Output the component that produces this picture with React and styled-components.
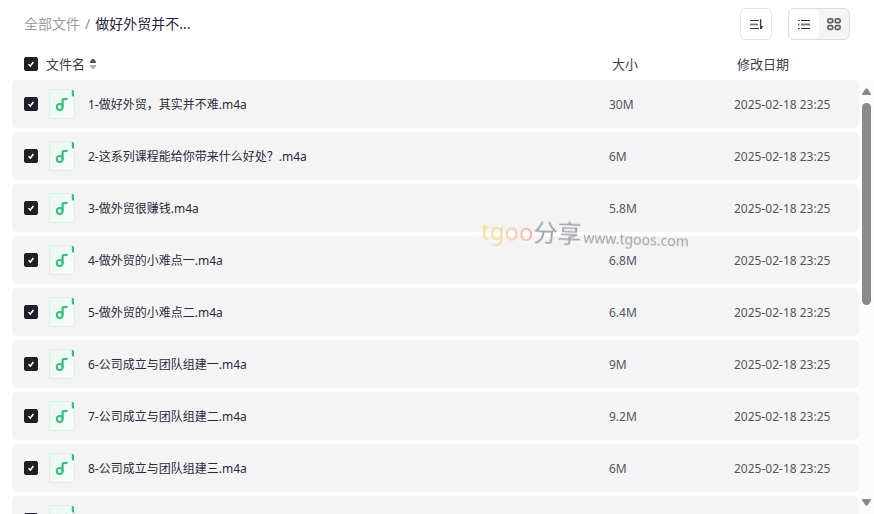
import React, { useState } from "react";
import styled, { createGlobalStyle } from "styled-components";

const initialFiles = [
  { id: 1, name: "1-做好外贸，其实并不难.m4a", size: "30M" },
  { id: 2, name: "2-这系列课程能给你带来什么好处？.m4a", size: "6M" },
  { id: 3, name: "3-做外贸很赚钱.m4a", size: "5.8M" },
  { id: 4, name: "4-做外贸的小难点一.m4a", size: "6.8M" },
  { id: 5, name: "5-做外贸的小难点二.m4a", size: "6.4M" },
  { id: 6, name: "6-公司成立与团队组建一.m4a", size: "9M" },
  { id: 7, name: "7-公司成立与团队组建二.m4a", size: "9.2M" },
  { id: 8, name: "8-公司成立与团队组建三.m4a", size: "6M" },
  { id: 9, name: "", size: "" }, // still loading
];

const modified = "2025-02-18 23:25";

const SortIcon = () => (
  <svg width="16" height="16" viewBox="0 0 16 16" fill="none">
    <path d="M2 4.5h9M2 12.5h9" stroke="#3c3c42" strokeWidth="1.2" />
    <path d="M2 8.5h8" stroke="#77777c" strokeWidth="1.8" />
    <path d="M12.6 3.2v9" stroke="#3c3c42" strokeWidth="1.4" />
    <path d="M12 10h3l-1.2 3H12z" fill="#3c3c42" />
  </svg>
);

const ListIcon = () => (
  <svg width="14" height="14" viewBox="0 0 14 14" fill="none">
    <path d="M1 3.5h1.5M4 3.5h9M1 11.5h1.5M4 11.5h9" stroke="#2b2b31" strokeWidth="1.2" />
    <path d="M1 7.5h1.5M4 7.5h9" stroke="#77777c" strokeWidth="1.8" />
  </svg>
);

const GridIcon = () => (
  <svg width="16" height="14" viewBox="0 0 16 14" fill="none" stroke="#5f5f65" strokeWidth="1.7">
    <rect x="1.9" y="1.9" width="4.8" height="3.8" rx="1.3" />
    <rect x="9.3" y="1.9" width="4.8" height="3.8" rx="1.3" />
    <rect x="1.9" y="8.6" width="4.8" height="3.8" rx="1.3" />
    <rect x="9.3" y="8.6" width="4.8" height="3.8" rx="1.3" />
  </svg>
);

const AudioFileIcon = () => (
  <svg width="26" height="30" viewBox="0 0 26 30" fill="none">
    <defs>
      <linearGradient id="paper" x1="0" y1="0" x2="1" y2="1">
        <stop offset="0" stopColor="#e9f6f0" />
        <stop offset="1" stopColor="#f9fdfb" />
      </linearGradient>
    </defs>
    <path d="M1 .5h22l2.5 7V29a.5.5 0 0 1-.5.5H1a.5.5 0 0 1-.5-.5V1A.5.5 0 0 1 1 .5z" fill="url(#paper)" stroke="#d9f0e5" />
    <path d="M22.8 1h.8c.9.3 1.4 1 1.4 2v4.6h-.7c-.9 0-1.5-.5-1.5-1.4z" fill="#35bd7c" />
    <circle cx="10.7" cy="18" r="2.9" stroke="#35c27f" strokeWidth="2" />
    <path d="M13.6 18v-7.2c0-.4.2-.6.6-.6l3.6-.3" stroke="#35c27f" strokeWidth="2.2" strokeLinejoin="round" strokeLinecap="round" />
  </svg>
);

const SortArrows = () => (
  <svg width="6" height="10" viewBox="0 0 6 10">
    <path d="M2.2 0h1.6L6 2.6V4H0V2.6z" fill="#55555b" />
    <path d="M0 6h6v1.4L3.8 10H2.2L0 7.4z" fill="#b4b4b8" />
  </svg>
);

const ScrollArrow = ({ down }) => (
  <svg width="9" height="7" viewBox="0 0 9 7">
    <path d={down ? "M0 0h9v1L5.5 6.5h-2L0 1z" : "M0 7h9V6L5.5.5h-2L0 6z"} fill="#8a8a8a" />
  </svg>
);

export default function App() {
  const [selected, setSelected] = useState(initialFiles.map((file) => file.id));
  const [view, setView] = useState("list");

  const allSelected = selected.length === initialFiles.length;

  const toggleAll = () => {
    setSelected(allSelected ? [] : initialFiles.map((file) => file.id));
  };

  const toggleFile = (id) => {
    setSelected(
      selected.includes(id) ? selected.filter((item) => item !== id) : [...selected, id]
    );
  };

  return (
    <Page>
      <GlobalStyle />
      <TopBar>
        <Breadcrumb>
          <Crumb href="#all">全部文件</Crumb>
          <Slash>/</Slash>
          <Current>做好外贸并不...</Current>
        </Breadcrumb>
        <SortButton aria-label="排序">
          <SortIcon />
        </SortButton>
        <ViewSwitch>
          <ViewButton aria-label="列表" $active={view === "list"} onClick={() => setView("list")}>
            <ListIcon />
          </ViewButton>
          <ViewButton aria-label="网格" $active={view === "grid"} onClick={() => setView("grid")}>
            <GridIcon />
          </ViewButton>
        </ViewSwitch>
      </TopBar>

      <Content>
        <ListPane>
          <FileTable>
            <thead>
              <tr>
                <HeaderCell>
                  <NameHeader>
                    <Checkbox id="all" aria-label="全选" checked={allSelected} onChange={toggleAll} />
                    <HeaderSort>
                      文件名
                      <SortArrows />
                    </HeaderSort>
                  </NameHeader>
                </HeaderCell>
                <HeaderCell $width="125px">大小</HeaderCell>
                <HeaderCell $width="125px">修改日期</HeaderCell>
              </tr>
            </thead>
            <tbody>
              {initialFiles.map((file) => (
                <tr key={file.id}>
                  <Cell>
                    <NameColumn>
                      <Checkbox
                        id={`file-${file.id}`}
                        checked={selected.includes(file.id)}
                        onChange={() => toggleFile(file.id)}
                      />
                      <AudioFileIcon />
                      <FileName htmlFor={`file-${file.id}`}>{file.name}</FileName>
                    </NameColumn>
                  </Cell>
                  <Cell>{file.size}</Cell>
                  <Cell>{file.size && modified}</Cell>
                </tr>
              ))}
            </tbody>
          </FileTable>
        </ListPane>
        <Scrollbar aria-hidden="true">
          <ScrollArrow />
          <Track>
            <Thumb />
          </Track>
          <ScrollArrow down />
        </Scrollbar>
      </Content>

      <Watermark>
        <Brand>
          <BrandLatin>tgoo</BrandLatin>分享
        </Brand>
        <Site>www.tgoos.com</Site>
      </Watermark>
    </Page>
  );
}

const GlobalStyle = createGlobalStyle`
  * {
    box-sizing: border-box;
  }

  body {
    margin: 0;
    background: #fff;
    font-family: "Noto Sans", "Noto Sans CJK SC", sans-serif;
  }

  button {
    font-family: inherit;
    cursor: pointer;
  }
`;

const Page = styled.div`
  position: relative;
  display: flex;
  flex-direction: column;
  height: 100vh;
  overflow: hidden;
`;

const TopBar = styled.header`
  display: flex;
  align-items: center;
  padding: 8px 24px 4px;
`;

const Breadcrumb = styled.nav`
  display: flex;
  flex: 1;
  gap: 5px;
  font-size: 14px;
  line-height: 20px;
`;

const Crumb = styled.a`
  color: #9c9ca2;
  text-decoration: none;
`;

const Slash = styled.span`
  color: #8f8f96;
`;

const Current = styled.span`
  color: #25263a;
`;

const SortButton = styled.button`
  display: flex;
  align-items: center;
  justify-content: center;
  width: 32px;
  height: 32px;
  margin-right: 16px;
  padding: 0;
  border: 1px solid #e4e4e6;
  border-radius: 6px;
  background: #fff;
`;

const ViewSwitch = styled.div`
  display: flex;
  width: 62px;
  height: 32px;
  border: 1px solid #dcdcde;
  border-radius: 6px;
  background: #f4f4f4;
  overflow: hidden;
`;

const ViewButton = styled.button`
  display: flex;
  flex: 1;
  align-items: center;
  justify-content: center;
  padding: 0;
  border: none;
  border-radius: 5px;
  background: ${(props) => (props.$active ? "#fff" : "transparent")};
`;

const Content = styled.main`
  display: flex;
  flex: 1;
  min-height: 0;
`;

const ListPane = styled.div`
  flex: 1;
  padding-left: 12px;
  overflow-y: auto;
  scrollbar-width: none;
`;

const FileTable = styled.table`
  width: 100%;
  table-layout: fixed;
  border-collapse: separate;
  border-spacing: 0 4px;
`;

const HeaderCell = styled.th`
  position: sticky;
  top: 0;
  width: ${(props) => props.$width || "auto"};
  height: 28px;
  padding: 4px 0 0 3px;
  background: #fff;
  color: #3c3c52;
  font-size: 13px;
  font-weight: 400;
  line-height: 20px;
  text-align: left;

  &:first-child {
    padding-left: 12px;
  }
`;

const NameHeader = styled.div`
  display: flex;
  align-items: center;
  gap: 8px;
`;

const HeaderSort = styled.button`
  display: flex;
  align-items: center;
  gap: 5px;
  padding: 0;
  border: none;
  background: none;
  color: inherit;
  font-size: 13px;
  line-height: 20px;
`;

const Cell = styled.td`
  height: 48px;
  padding: 2px 0 0;
  background: #f4f4f4;
  color: #55565e;
  font-size: 12px;
  line-height: 20px;
  white-space: nowrap;

  &:first-child {
    padding: 0 0 0 12px;
    border-radius: 5px 0 0 5px;
  }

  &:last-child {
    border-radius: 0 5px 5px 0;
  }
`;

const NameColumn = styled.div`
  display: flex;
  align-items: center;

  > svg {
    flex: none;
    margin: 0 13px 0 11px;
  }
`;

const FileName = styled.label`
  padding-top: 2px;
  overflow: hidden;
  color: #2a2b3d;
  text-overflow: ellipsis;
`;

const Checkbox = styled.input.attrs({ type: "checkbox" })`
  flex: none;
  width: 14px;
  height: 14px;
  margin: 0;
  border: 1px solid #1e1f28;
  border-radius: 2px;
  appearance: none;
  background: #fff;

  &:checked {
    background: #1e1f28
      url("data:image/svg+xml,%3Csvg xmlns='http://www.w3.org/2000/svg' viewBox='0 0 12 12'%3E%3Cpath d='M3.6 6.2l1.8 1.9 3-4' fill='none' stroke='white' stroke-width='1.6'/%3E%3C/svg%3E")
      center / 12px no-repeat;
  }
`;

const Scrollbar = styled.div`
  display: flex;
  flex-direction: column;
  align-items: center;
  width: 15px;
  margin-top: 36px;
  padding: 8px 0;
  background: #fcfcfc;
`;

const Track = styled.div`
  flex: 1;
  width: 9px;
  margin: 8px 0;
`;

const Thumb = styled.div`
  height: 52%;
  border-radius: 5px;
  background: #8b8b8b;
`;

/* floats over the list */
const Watermark = styled.div`
  position: absolute;
  top: 218px;
  left: 55%;
  display: flex;
  align-items: center;
  gap: 2px;
  color: #a0a1a6;
  transform: rotate(2deg);
  pointer-events: none;
`;

const Brand = styled.span`
  font-size: 24px;
  line-height: 32px;
`;

const BrandLatin = styled.span`
  background: linear-gradient(90deg, #f8e39a, #fbcfa4 50%, #f9b0a8);
  background-clip: text;
  color: transparent;
`;

const Site = styled.span`
  padding-top: 8px;
  font-size: 14px;
  line-height: 20px;
`;
